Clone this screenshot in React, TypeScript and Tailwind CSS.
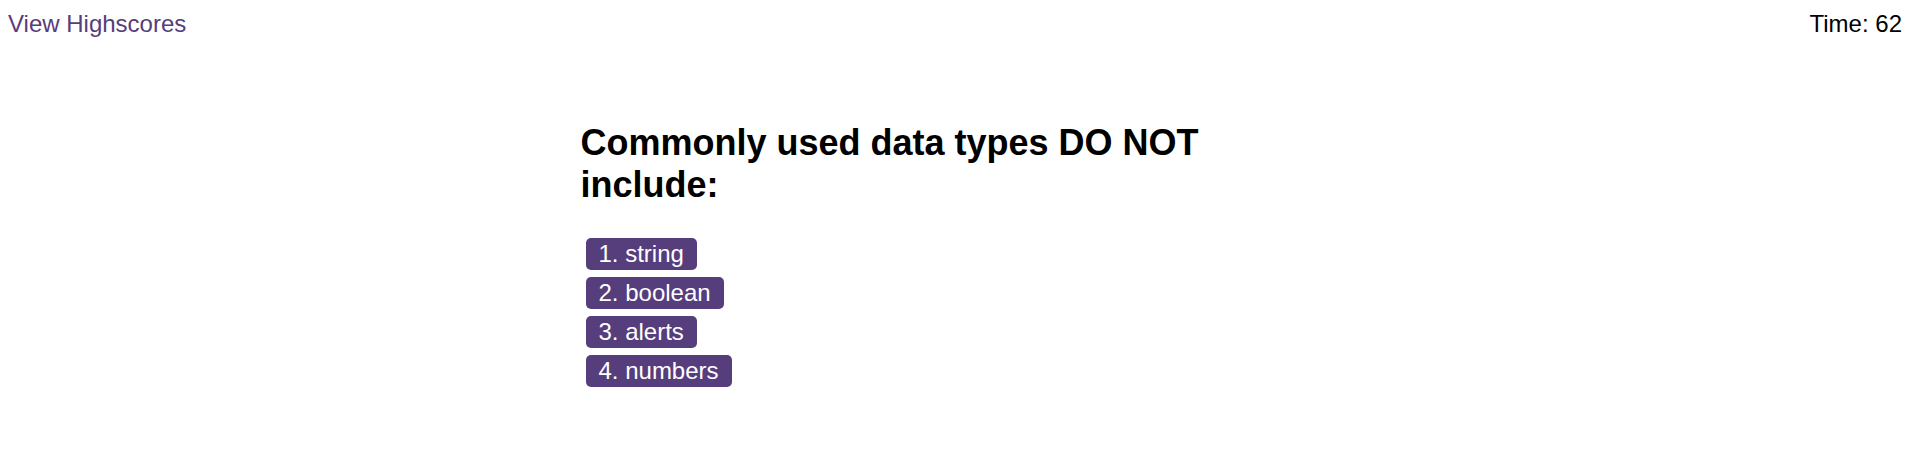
const choices = ["1. string", "2. boolean", "3. alerts", "4. numbers"];

export default function App() {
  return (
    <div className="min-h-[464px] bg-white font-['Liberation_Sans',Arial,sans-serif] text-black">
      <header className="flex justify-between pl-[8px] pr-[13px] pt-[10px] text-[24px] leading-[28px]">
        <a className="text-[#563d7c] cursor-pointer">View Highscores</a>
        <span>Time: 62</span>
      </header>
      <main className="ml-[30%] w-[700px] pl-[6px] pt-[84px]">
        <h1 className="text-[36px] font-bold leading-[41.5px]">Commonly used data types DO NOT include:</h1>
        <ul className="mt-[33px] ml-[5px] flex flex-col items-start gap-[7px]">
          {choices.map((c) => (
            <li key={c}>
              <button className="rounded-[5px] bg-[#563d7c] px-[13px] py-[2px] text-[24px] leading-[28px] text-white">
                {c}
              </button>
            </li>
          ))}
        </ul>
      </main>
    </div>
  );
}
